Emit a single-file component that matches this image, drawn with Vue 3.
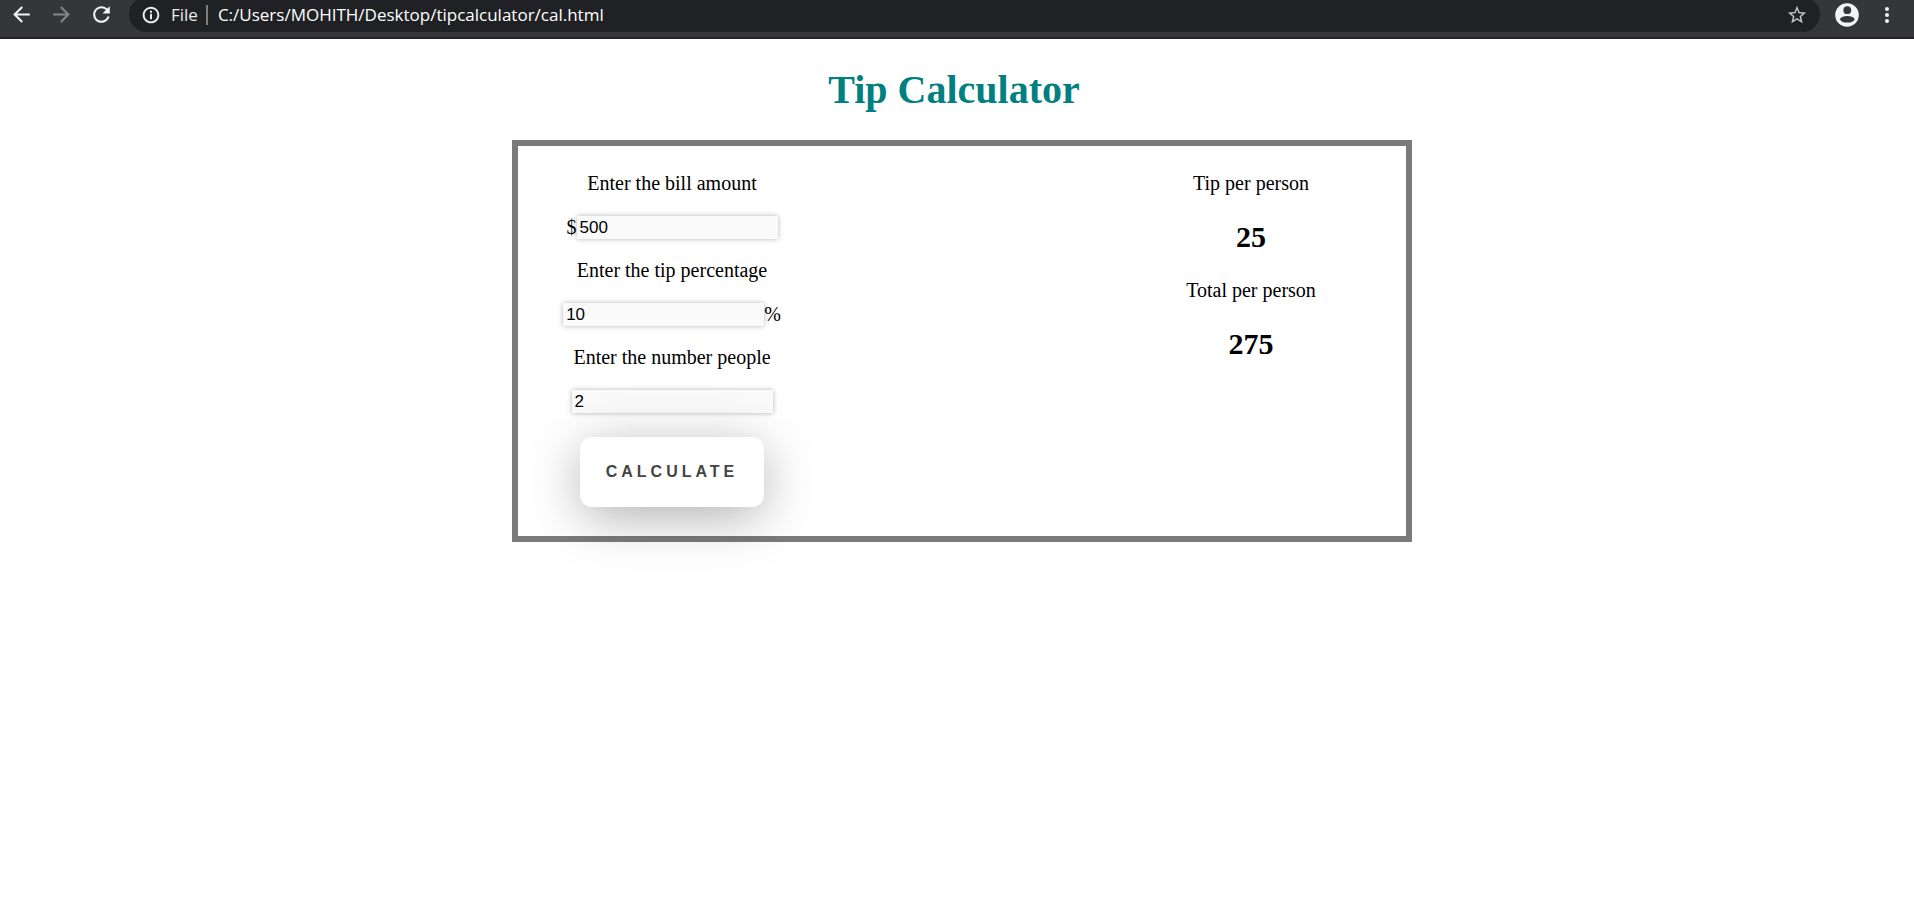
<script setup>
import { ref } from 'vue'

const address = ref('C:/Users/MOHITH/Desktop/tipcalculator/cal.html')
const bill = ref('500')
const percentage = ref('10')
const people = ref('2')
const tipPerPerson = ref(25)
const totalPerPerson = ref(275)

function calculate() {
  const count = Number(people.value) || 1
  const amount = Number(bill.value) || 0
  const tip = (amount * (Number(percentage.value) || 0)) / 100
  tipPerPerson.value = tip / count
  totalPerPerson.value = (amount + tip) / count
}
</script>

<template>
  <header class="toolbar">
    <button class="tool" type="button" aria-label="Back">
      <svg width="25" height="25" viewBox="0 0 24 24"><path fill="#f1f3f4" d="M20 11H7.83l5.59-5.59L12 4l-8 8 8 8 1.41-1.41L7.83 13H20v-2z" /></svg>
    </button>
    <button class="tool" type="button" aria-label="Forward">
      <svg width="25" height="25" viewBox="0 0 24 24"><path fill="#85868a" d="M12 4l-1.41 1.41L16.17 11H4v2h12.17l-5.58 5.59L12 20l8-8z" /></svg>
    </button>
    <button class="tool" type="button" aria-label="Reload">
      <svg width="25" height="25" viewBox="0 0 24 24"><path fill="#f1f3f4" d="M17.65 6.35C16.2 4.9 14.21 4 12 4c-4.42 0-7.99 3.58-7.99 8s3.57 8 7.99 8c3.73 0 6.84-2.55 7.73-6h-2.08c-.82 2.33-3.04 4-5.65 4-3.31 0-6-2.69-6-6s2.69-6 6-6c1.66 0 3.14.69 4.22 1.78L13 11h7V4l-2.35 2.35z" /></svg>
    </button>
    <div class="omnibox">
      <button class="site" type="button">
        <svg width="20" height="20" viewBox="0 0 24 24"><path fill="#e8eaed" d="M10.8 10.6h2.4V17h-2.4zM10.8 7h2.4v2.4h-2.4zM12 2C6.48 2 2 6.48 2 12s4.48 10 10 10 10-4.48 10-10S17.52 2 12 2zm0 17.6c-4.19 0-7.6-3.41-7.6-7.6S7.81 4.4 12 4.4s7.6 3.41 7.6 7.6-3.41 7.6-7.6 7.6z" /></svg>
        <span>File</span>
      </button>
      <span class="divider"></span>
      <input v-model="address" class="address" type="text" aria-label="Address" spellcheck="false" />
      <button class="tool" type="button" aria-label="Bookmark this page">
        <svg width="22" height="22" viewBox="0 0 24 24"><path fill="#c4c5c7" d="M22 9.24l-7.19-.62L12 2 9.19 8.63 2 9.24l5.46 4.73L5.82 21 12 17.27 18.18 21l-1.63-7.03L22 9.24zM12 15.4l-3.76 2.27 1-4.28-3.32-2.88 4.38-.38L12 6.1l1.71 4.04 4.38.38-3.32 2.88 1 4.28L12 15.4z" /></svg>
      </button>
    </div>
    <button class="tool profile" type="button" aria-label="Profile">
      <svg width="24" height="24" viewBox="0 0 24 24">
        <circle cx="12" cy="12" r="11.8" fill="#f1f3f4" />
        <circle cx="12.3" cy="7.2" r="3.9" fill="#35363a" />
        <ellipse cx="12.3" cy="16.3" rx="7.2" ry="3.3" fill="#35363a" />
      </svg>
    </button>
    <button class="tool" type="button" aria-label="Menu">
      <svg width="24" height="24" viewBox="0 0 24 24" fill="#f1f3f4"><circle cx="12" cy="6" r="2" /><circle cx="12" cy="12" r="2" /><circle cx="12" cy="18" r="2" /></svg>
    </button>
  </header>

  <main class="page">
    <h1 class="title">Tip Calculator</h1>
    <div class="card">
      <form class="entry" @submit.prevent="calculate">
        <div class="field">
          <label for="bill">Enter the bill amount</label>
          <div class="row"><span>$</span><input id="bill" v-model="bill" type="text" /></div>
        </div>
        <div class="field">
          <label for="percentage">Enter the tip percentage</label>
          <div class="row"><input id="percentage" v-model="percentage" type="text" /><span>%</span></div>
        </div>
        <div class="field">
          <label for="people">Enter the number people</label>
          <div class="row"><input id="people" v-model="people" type="text" /></div>
        </div>
        <button class="calculate" type="submit">CALCULATE</button>
      </form>
      <section class="results">
        <p>Tip per person</p>
        <h2>{{ tipPerPerson }}</h2>
        <p>Total per person</p>
        <h2>{{ totalPerPerson }}</h2>
      </section>
    </div>
  </main>
</template>

<style>
body {
  margin: 0;
  background: #fff;
}
</style>

<style scoped>
.toolbar {
  box-sizing: border-box;
  display: flex;
  align-items: center;
  height: 39px;
  padding: 0 15px 8px 9px;
  overflow: hidden;
  background: #35363a;
  border-bottom: 2px solid #242227;
  font-family: "Open Sans", "Noto Sans", sans-serif;
  font-size: 17px;
}
button {
  border: 0;
  cursor: pointer;
}
svg {
  display: block;
}
.tool {
  flex: none;
  padding: 0;
  background: none;
}
.toolbar > .tool + .tool {
  margin-left: 15px;
}
.omnibox {
  box-sizing: border-box;
  display: flex;
  flex: 1;
  align-items: center;
  height: 35px;
  margin-left: 15px;
  padding: 0 12px;
  border-radius: 18px;
  background: #202124;
}
.site {
  display: flex;
  align-items: center;
  gap: 10px;
  padding: 0;
  background: none;
  color: #e8eaed;
  font: inherit;
}
.divider {
  width: 2px;
  height: 20px;
  margin: 0 10px 0 8px;
  background: #7c7d80;
}
.address {
  flex: 1;
  min-width: 0;
  padding: 0;
  border: 0;
  outline: 0;
  background: none;
  color: #fff;
  font: inherit;
}
.profile {
  margin-left: 15px;
}
.toolbar > .profile + .tool {
  margin-left: 16px;
}
.page {
  padding: 28px 0 40px 10px;
  font-family: "Liberation Serif", "Times New Roman", serif;
  font-size: 20px;
  line-height: 23px;
  color: #000;
}
.title {
  margin: 0 16px 27px 0;
  color: #008080;
  font-size: 40px;
  line-height: 46px;
  text-align: center;
}
.card {
  box-sizing: border-box;
  display: flex;
  justify-content: space-between;
  max-width: 900px;
  margin: 0 auto;
  padding: 26px 0 29px;
  border: 6px solid #7b7b7b;
}
.entry,
.results {
  display: flex;
  flex-direction: column;
  align-items: center;
}
.entry {
  flex: 0 1 308px;
  gap: 20px;
}
.field {
  display: flex;
  flex-direction: column;
  align-items: center;
  gap: 21px;
}
.row {
  display: flex;
}
.row input {
  box-sizing: border-box;
  width: 201px;
  height: 23px;
  padding: 0 3px;
  border: 0;
  outline: 0;
  background: #fafafa;
  box-shadow: 0 0 5px rgba(0, 0, 0, 0.3);
  color: #000;
  font-family: "Liberation Sans", Arial, sans-serif;
  font-size: 17px;
}
.calculate {
  position: relative;
  height: 70px;
  margin-top: 4px;
  padding: 0 26px;
  border-radius: 12px;
  background: #fff;
  box-shadow: 0 10px 54px -3px rgba(0, 0, 0, 0.35);
  color: #444;
  font-family: "Liberation Sans", Arial, sans-serif;
  font-size: 16px;
  font-weight: 700;
  letter-spacing: 4px;
}
.results {
  flex: 0 1 310px;
  gap: 25px;
}
.results p,
.results h2 {
  margin: 0;
}
.results h2 {
  font-size: 30px;
  line-height: 34px;
}
</style>
